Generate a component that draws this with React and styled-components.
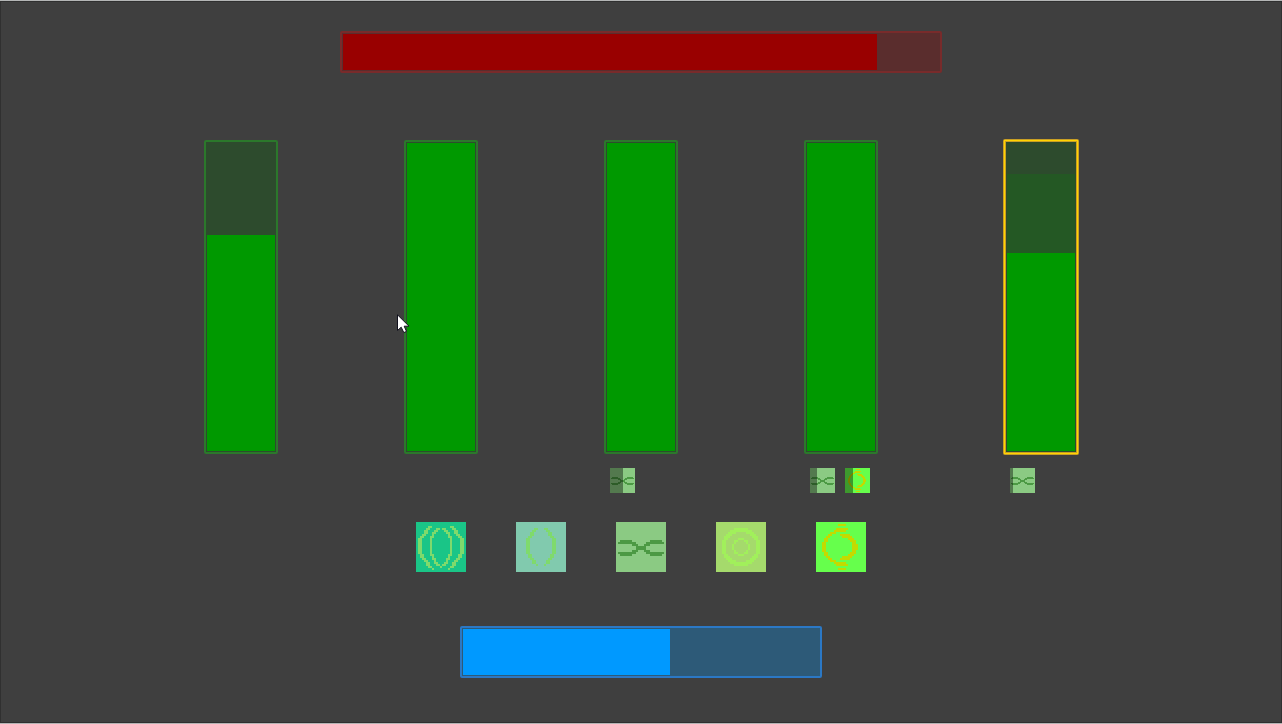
import React from "react";
import styled, { createGlobalStyle } from "styled-components";

const GlobalStyle = createGlobalStyle`
  * { box-sizing: border-box; }
  body { margin: 0; background: #3f3f3f; font-family: "Liberation Sans", sans-serif; }
`;

const Screen = styled.main`
  position: relative;
  display: flex;
  flex-direction: column;
  align-items: center;
  min-height: 100vh;
  padding: 30px 16px;
  background: #3f3f3f;
  border-top: 1px solid #b4b6b6;
  border-bottom: 1px solid #b4b4b4;
  box-shadow: inset 0 0 0 1px #303030;
  overflow: hidden;
`;

const Frame = styled.div`
  display: flex;
  width: 100%;
  max-width: ${(p) => p.$width}px;
  height: ${(p) => p.$height}px;
  padding: 1px;
  border: 2px solid ${(p) => p.$line};
  border-radius: 2px;
  background: ${(p) => p.$empty};
`;

const Fill = styled.div`
  background: ${(p) => p.$color};
`;

const Party = styled.section`
  display: flex;
  justify-content: center;
  gap: 124px;
  margin-top: 66px;
`;

const Member = styled.div`
  display: flex;
  flex-direction: column;
  gap: 13px;
  width: 76px;
`;

const HealthFrame = styled.button`
  display: flex;
  flex-direction: column;
  justify-content: flex-end;
  height: ${(p) => (p.$selected ? 316 : 314)}px;
  margin: ${(p) => (p.$selected ? 0 : 1)}px;
  padding: 1px;
  border: ${(p) => (p.$selected ? "3px solid #c99f25" : "2px solid #2b782b")};
  border-radius: 2px;
  background: #2d4b2d;
  position: relative;

  &::after {
    content: "";
    display: ${(p) => (p.$selected ? "block" : "none")};
    position: absolute;
    inset: -2px;
    border: 1px solid #ffd400;
  }
`;

const Effects = styled.div`
  display: flex;
  gap: 10px;
  height: 25px;
  padding-left: 7px;
`;

const Effect = styled.div`
  position: relative;
  width: 25px;
  height: 25px;
`;

const Elapsed = styled.div`
  position: absolute;
  inset: 0 auto 0 0;
  background: rgba(0, 0, 0, 0.4);
`;

const SpellBar = styled.nav`
  display: flex;
  gap: 50px;
  margin: 29px 0 54px;
`;

const SpellButton = styled.button`
  width: 50px;
  height: 50px;
  padding: 0;
  border: 0;
  background: none;
`;

const Glyph = styled.svg`
  display: block;
  width: 100%;
  height: 100%;
  shape-rendering: crispEdges;
`;

const Pointer = styled.svg`
  position: absolute;
  left: 397px;
  top: 313px;
  width: 13px;
  height: 20px;
  pointer-events: none;
`;

/* Each glyph is a 25 x 25 grid; runs are [row, first column, last column]. */
const flipX = (runs) => runs.concat(runs.map(([y, a, b]) => [y, 24 - b, 24 - a]));
const flipY = (runs, sum) => runs.concat(runs.map(([y, a, b]) => [sum - y, a, b]));
const column = (from, to, a, b) =>
  Array.from({ length: to - from + 1 }, (_, i) => [from + i, a, b]);

const SPELLS = {
  bloom: {
    label: "Bloom",
    back: "#1ac587",
    ink: "#7fda6c",
    runs: flipX([
      [2, 6, 7], [3, 5, 6], [4, 4, 5], [5, 4, 5], [6, 3, 4], [7, 2, 3],
      ...column(8, 15, 1, 2), [16, 2, 3], [17, 2, 3], [18, 3, 4],
      [19, 4, 5], [20, 5, 6], [21, 5, 6], [22, 6, 7], [23, 8, 8],
      [3, 10, 11], [4, 9, 10], [5, 8, 9], [6, 8, 8], [7, 7, 8],
      ...column(8, 15, 7, 7), [16, 7, 8], [17, 8, 8], [18, 8, 9],
      [19, 9, 9], [20, 9, 10], [21, 10, 11], [22, 12, 12],
    ]),
  },
  bud: {
    label: "Bud",
    back: "#81caae",
    ink: "#7fda6c",
    runs: flipX([
      [3, 9, 10], [4, 8, 9], [5, 7, 8], [6, 7, 8], [7, 6, 7],
      ...column(8, 15, 5, 6), [16, 6, 7], [17, 6, 7],
      [18, 7, 8], [19, 8, 9], [20, 8, 9], [21, 10, 10],
    ]),
  },
  vine: {
    label: "Vine",
    back: "#8bca83",
    ink: "#4c9944",
    runs: flipY(flipX([[9, 2, 7], [10, 1, 9], [11, 8, 10], [12, 10, 12]]), 25),
  },
  ripple: {
    label: "Ripple",
    back: "#a5da6c",
    ink: "#a1f05b",
    runs: flipY(
      flipX([
        [3, 9, 12], [4, 7, 12], [5, 6, 9], [6, 5, 7], [7, 4, 6], [8, 4, 5],
        ...column(9, 12, 3, 4),
        [8, 11, 12], [9, 9, 10], [10, 9, 9], [11, 8, 8], [12, 8, 8],
      ]),
      24
    ),
  },
  cycle: {
    label: "Cycle",
    back: "#66ff4c",
    ink: "#c4da00",
    runs: flipY(
      [
        [1, 11, 14], [3, 10, 15], [4, 9, 14], [5, 7, 9], [6, 6, 7], [7, 5, 6],
        [8, 4, 5], [9, 4, 5], [10, 3, 4], [11, 3, 4], [12, 3, 4],
        [6, 12, 16], [7, 13, 17], [8, 16, 18], [9, 17, 19], [10, 18, 19],
        [11, 18, 20], [12, 18, 20],
      ],
      24
    ),
  },
};

const PARTY = [
  { health: 70, effects: [] },
  { health: 100, effects: [] },
  { health: 100, effects: [{ spell: "vine", elapsed: 50 }] },
  { health: 100, effects: [{ spell: "vine", elapsed: 27 }, { spell: "cycle", elapsed: 31 }] },
  { health: 64.3, incoming: 25.6, selected: true, effects: [{ spell: "vine", elapsed: 13 }] },
];

function SpellGlyph({ spell }) {
  const { back, ink, runs } = SPELLS[spell];
  const d = runs.map(([y, a, b]) => `M${a} ${y}h${b - a + 1}v1h${a - b - 1}z`).join("");
  return (
    <Glyph viewBox="0 0 25 25" aria-hidden="true">
      <rect width="25" height="25" fill={back} />
      <path d={d} fill={ink} />
    </Glyph>
  );
}

function Meter({ label, value, color, ...frame }) {
  return (
    <Frame role="meter" aria-label={label} aria-valuenow={value} {...frame}>
      <Fill $color={color} style={{ width: `${value}%` }} />
    </Frame>
  );
}

export default function App() {
  return (
    <>
      <GlobalStyle />
      <Screen>
        <Meter label="Boss health" value={89.6} color="#990000"
          $width={602} $height={42} $line="#782b2b" $empty="#5a2d2d" />
        <Party aria-label="Party">
          {PARTY.map((m, i) => (
            <Member key={i}>
              <HealthFrame type="button" $selected={m.selected}
                aria-label={`Party member ${i + 1}, health ${m.health}%`}>
                {m.incoming && <Fill $color="#245824" style={{ height: `${m.incoming}%` }} />}
                <Fill $color="#009900" style={{ height: `${m.health}%` }} />
              </HealthFrame>
              <Effects>
                {m.effects.map((e) => (
                  <Effect key={e.spell}>
                    <SpellGlyph spell={e.spell} />
                    <Elapsed style={{ width: `${e.elapsed}%` }} />
                  </Effect>
                ))}
              </Effects>
            </Member>
          ))}
        </Party>
        <SpellBar aria-label="Spells">
          {Object.entries(SPELLS).map(([id, s]) => (
            <SpellButton key={id} type="button" aria-label={s.label}>
              <SpellGlyph spell={id} />
            </SpellButton>
          ))}
        </SpellBar>
        <Meter label="Mana" value={58.2} color="#0099ff"
          $width={362} $height={52} $line="#2b78c5" $empty="#2d5a78" />
        <Pointer viewBox="0 0 13 20" aria-hidden="true">
          <path d="M.5 .8V16.5L4.2 13.2L6.8 18.6L9.5 17.4L7.2 12.2H12Z"
            fill="#fff" stroke="#10101c" strokeWidth="1" />
        </Pointer>
      </Screen>
    </>
  );
}
